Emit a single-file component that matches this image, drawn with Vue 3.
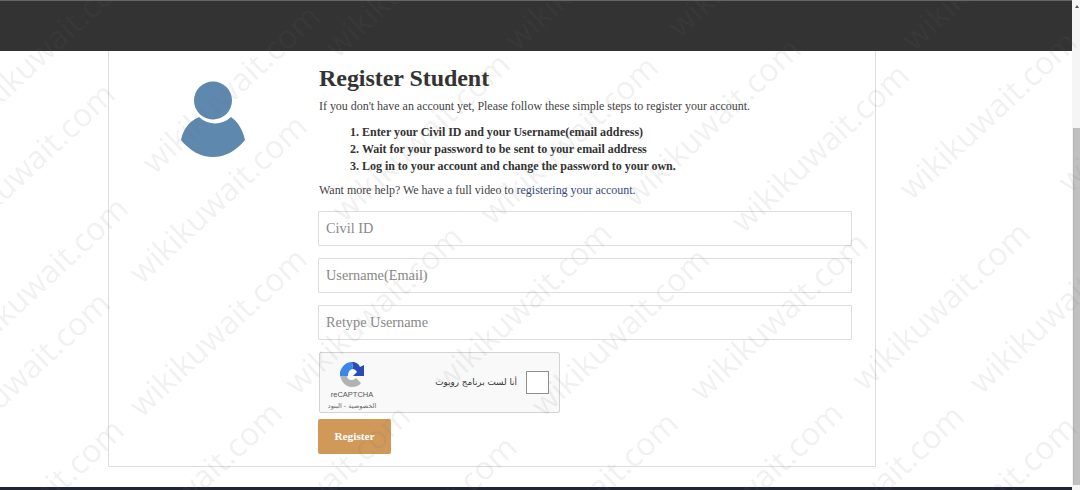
<template>
  <div class="page">
    <div class="main">
      <header class="topbar"></header>
      <div class="content">
        <section class="card">
          <div class="avatar-col">
            <svg class="avatar" width="66" height="80" viewBox="0 0 66 80">
              <circle cx="33" cy="19.500" r="19" fill="#5f88ae" />
              <path d="M19 36 A23 23 0 0 0 51 36 C58 41 63 49 65 59 C56 70 45 76 33 76 C21 76 10 70 1 59 C3 49 8 41 19 36 Z" fill="#5f88ae" />
            </svg>
          </div>
          <div class="form-col">
            <h1>Register Student</h1>
            <p class="intro">If you don't have an account yet, Please follow these simple steps to register your account.</p>
            <ol>
              <li>Enter your Civil ID and your Username(email address)</li>
              <li>Wait for your password to be sent to your email address</li>
              <li>Log in to your account and change the password to your own.</li>
            </ol>
            <p class="help">Want more help? We have a full video to <a href="#">registering your account.</a></p>
            <input v-for="f in fields" :key="f" type="text" :placeholder="f" />
            <div class="captcha">
              <div class="captcha-logo">
                <svg width="26" height="26" viewBox="0 0 26 26">
                  <path d="M1 14 L8 14 C8 18 10 19 13 19 C15 19 16 18 17 17 L22 22 C20 25 16 26 13 26 C6 26 2 20 1 14 Z" fill="#b2b2b2" />
                  <path d="M13 1 C17 1 20 3 21 6 L25 4 L25 15 L14 15 L18 11 C17 9 15 8 14 8 Z" fill="#2a4db5" />
                  <path d="M13 1 C7 1 3 5 1 11 L1 15 L9 15 C9 11 11 8 14 8 Z" fill="#3b86e6" />
                </svg>
                <span class="brand">reCAPTCHA</span>
                <span class="terms" dir="rtl">الخصوصية - البنود</span>
              </div>
              <div class="captcha-check">
                <span class="robot" dir="rtl">أنا لست برنامج روبوت</span>
                <span class="box"></span>
              </div>
            </div>
            <button type="button">Register</button>
          </div>
        </section>
      </div>
      <footer class="footer"></footer>
    </div>
    <aside class="scrollbar">
      <span class="arrow"></span>
      <div class="thumb"></div>
    </aside>
    <div class="watermarks">
      <span v-for="(m, i) in marks" :key="i" class="mark" :style="{ left: m.x + 'px', top: m.y + 'px' }">wikikuwait.com</span>
    </div>
  </div>
</template>

<script setup>
const fields = ['Civil ID', 'Username(Email)', 'Retype Username']

// watermark centres, read off the screenshot
const marks = [
  [46, 46], [230, 88], [420, 136], [568, 139], [711, 121], [819, 147], [987, 114], [1146, 107],
  [25, 166], [217, 198], [38, 280], [373, 309], [522, 305], [619, 331], [778, 315], [940, 305], [1057, 308],
  [20, 375], [217, 331], [34, 502], [192, 485], [320, 488], [427, 519], [588, 495], [753, 485], [874, 488], [987, 499],
  [413, -28], [593, -35], [756, -48], [990, -35]
].map(([x, y]) => ({ x, y }))
</script>

<style>
html, body {
  margin: 0;
  background: #fff;
}
</style>

<style scoped>
.page {
  position: relative;
  width: 1080px;
  height: 490px;
  overflow: hidden;
  display: flex;
  font-family: "Liberation Serif", "Times New Roman", serif;
  color: #444;
}

.main {
  width: 1072px;
  display: flex;
  flex-direction: column;
}

.topbar {
  height: 51px;
  flex: none;
  background: #333;
  border-top: 1px solid #666;
  box-sizing: border-box;
}

.content {
  flex: 1;
  padding: 0 196px 0 108px;
}

.card {
  display: flex;
  height: 416px;
  box-sizing: border-box;
  border: 1px solid #ddd;
  border-top: 0;
  border-radius: 0 0 2px 2px;
}

.avatar-col {
  width: 209px;
  padding-top: 30px;
  padding-right: 72px;
  display: flex;
  justify-content: flex-end;
  flex: none;
  box-sizing: border-box;
}

.avatar {
  display: block;
}

.form-col {
  width: 534px;
  flex: none;
  padding-top: 14px;
}

h1 {
  margin: 0 0 5px 1px;
  font-size: 24px;
  line-height: 27px;
  letter-spacing: -0.05px;
  color: #333;
}

.intro,
.help {
  margin: 0 0 0 1px;
  font-size: 12px;
  line-height: 18px;
  letter-spacing: -0.03px;
}

.help {
  margin-bottom: 12px;
}

ol {
  margin: 8.5px 0 5.5px 1px;
  padding-left: 43px;
  font-size: 12px;
  font-weight: bold;
  line-height: 17.25px;
  letter-spacing: -0.02px;
  color: #333;
}

a {
  color: #3a4a78;
  text-decoration: none;
}

input {
  display: block;
  width: 100%;
  height: 35px;
  box-sizing: border-box;
  margin-bottom: 12px;
  padding: 0 7px;
  border: 1px solid #ddd;
  border-radius: 1px;
  font-family: inherit;
  font-size: 14.3px;
  background: transparent;
}

input::placeholder {
  color: #888;
}

.captcha {
  width: 241px;
  height: 61px;
  box-sizing: border-box;
  margin: 0 0 6px 1px;
  display: flex;
  justify-content: space-between;
  align-items: center;
  padding: 0 10px 0 9px;
  background: #f9f9f9;
  border: 1px solid #d3d3d3;
  border-radius: 2px;
}

.captcha-logo {
  display: flex;
  flex-direction: column;
  align-items: center;
  width: 46px;
  padding-top: 8px;
}

.brand {
  margin-top: 3px;
  font: 7.5px/10px "Liberation Sans", Arial, sans-serif;
  color: #555;
}

.terms {
  margin-top: 1px;
  font: 6.5px/10px "DejaVu Sans", sans-serif;
  color: #666;
  white-space: nowrap;
}

.captcha-check {
  display: flex;
  align-items: center;
  gap: 9px;
}

.robot {
  font: 8.800px "DejaVu Sans", sans-serif;
  color: #333;
}

.box {
  width: 23px;
  height: 23px;
  box-sizing: border-box;
  background: #fff;
  border: 1px solid #8f8f8f;
}

button {
  display: block;
  width: 73px;
  height: 35px;
  padding: 0;
  border: 0;
  border-radius: 2px;
  background: #d0995a;
  color: #fff;
  font-family: inherit;
  font-size: 11.3px;
  font-weight: bold;
}

.footer {
  height: 3px;
  flex: none;
  background: #1f2633;
}

.scrollbar {
  width: 8px;
  flex: none;
  box-sizing: border-box;
  background: #f5f5f5;
  padding-top: 5px;
  padding-left: 3px;
}

.arrow {
  display: block;
  width: 0;
  height: 0;
  border-left: 2.500px solid transparent;
  border-right: 2.500px solid transparent;
  border-bottom: 3px solid #555;
}

.thumb {
  height: 357px;
  margin: 120px 0 0 -2px;
  background: #c0c0c0;
  border-left: 1px solid #b5b5b5;
}

.watermarks {
  position: absolute;
  inset: 0;
  pointer-events: none;
}

.mark {
  position: absolute;
  transform: translate(-50%, -50%) rotate(-43deg);
  font: 400 32px "Open Sans", sans-serif;
  color: rgba(110, 110, 110, 0.1);
  white-space: nowrap;
}
</style>
